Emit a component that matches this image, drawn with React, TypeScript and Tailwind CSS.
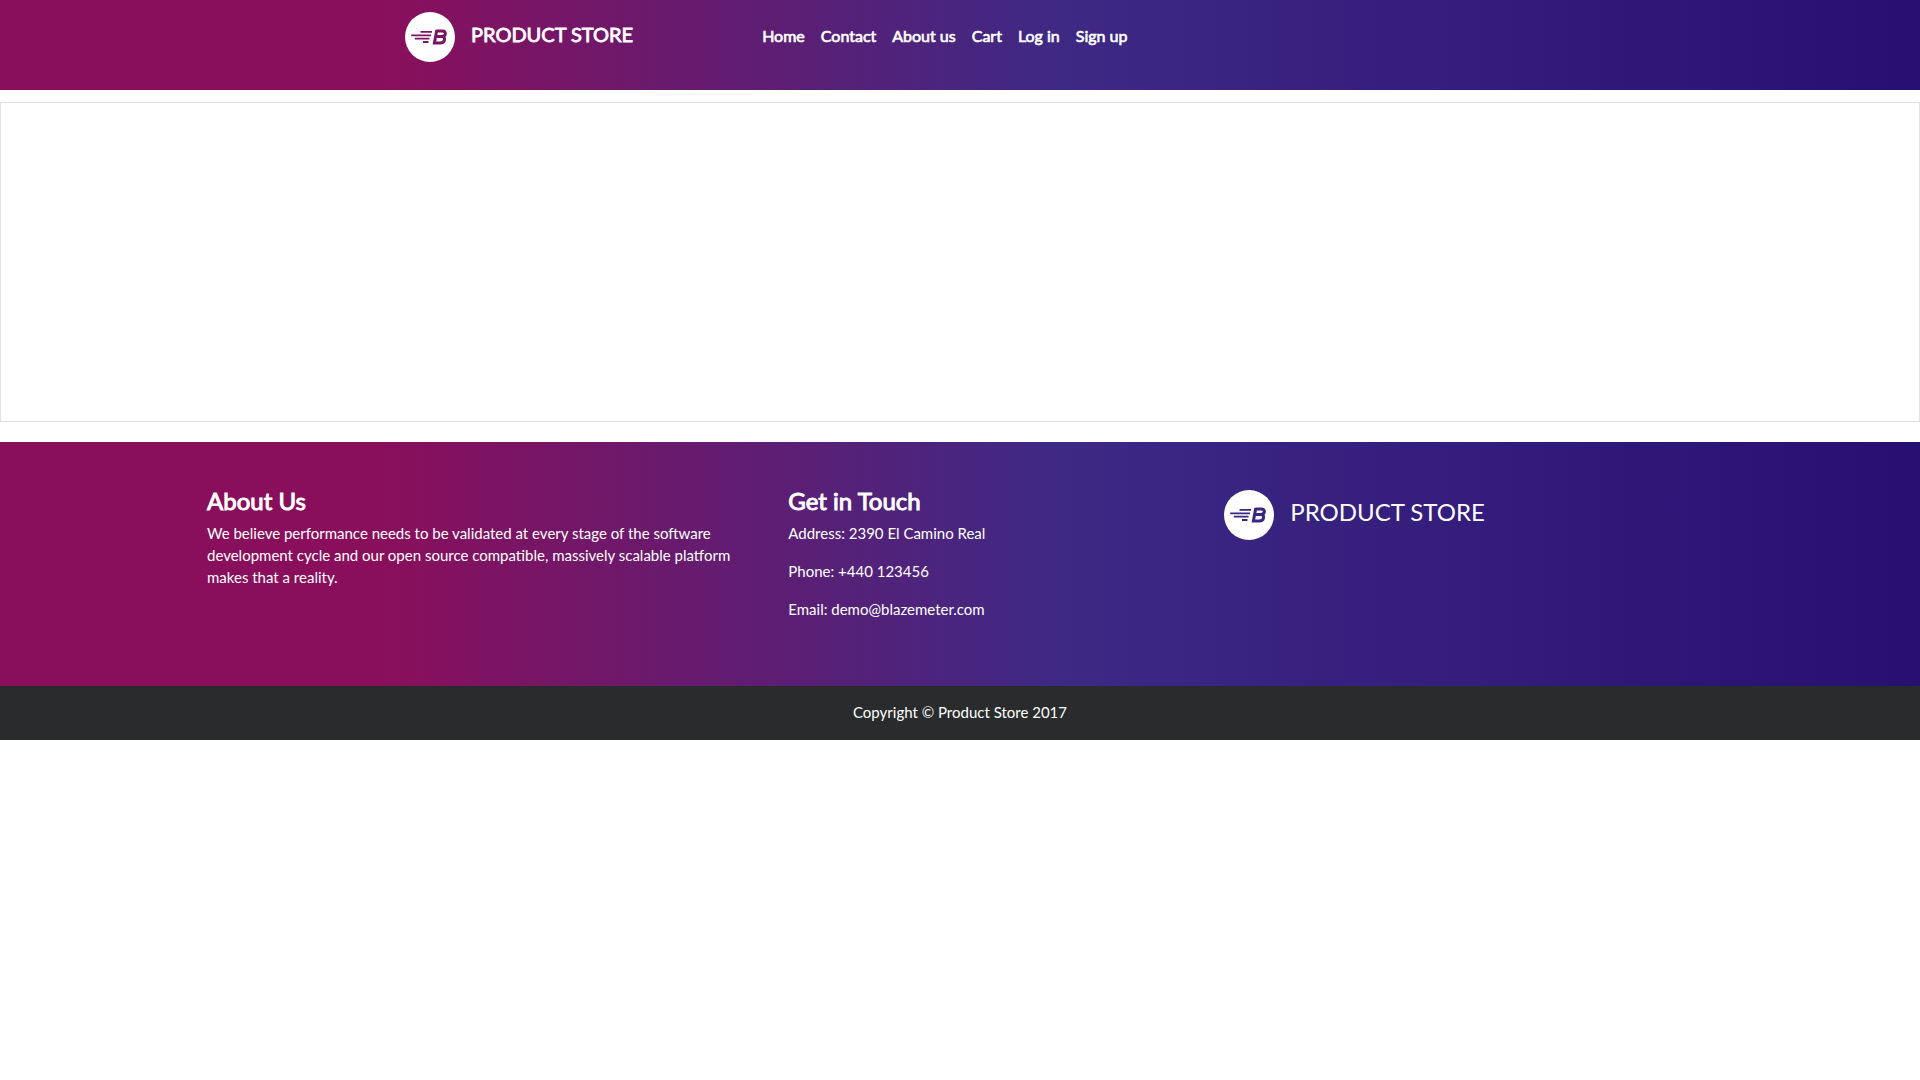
const navItems = ["Home", "Contact", "About us", "Cart", "Log in", "Sign up"];

const contactLines = [
  "Address: 2390 El Camino Real",
  "Phone: +440 123456",
  "Email: demo@blazemeter.com",
];

function Logo({ color }: { color: string }) {
  return (
    <svg viewBox="0 0 50 50" className="size-[50px] shrink-0" aria-hidden="true">
      <circle cx="25" cy="25" r="25" fill="#fff" />
      <g fill="none" stroke={color}>
        <path d="M15.5 19.9H27M6.2 23.3H26M9.8 26.7H24.5M18 30H23.5" strokeWidth="1.8" />
        <path
          d="M31.4 19H37.2C42 19 41 24.6 36.8 24.6H31.6M36.8 24.6C41.4 24.6 40 31 35.2 31H29.4L31.8 18"
          strokeWidth="3"
        />
      </g>
    </svg>
  );
}

export default function App() {
  return (
    <div className="font-['Lato',sans-serif] text-[15px] leading-[22px] text-white">
      <header className="h-[90px] bg-[linear-gradient(90deg,#890f5c_0%,#890f5c_20%,#3e2985_55%,#280f72_100%)]">
        <div className="mx-auto flex max-w-[1140px] items-start px-[15px] pt-3">
          <a href="#" className="flex items-start gap-4 text-[20px]">
            <Logo color="#7c1464" />
            <span className="pt-[11px] [-webkit-text-stroke:0.04em]">PRODUCT STORE</span>
          </a>
          <nav className="ml-[121px] flex pt-[13px] text-[16px] [-webkit-text-stroke:0.04em]">
            {navItems.map((item) => (
              <a key={item} href="#" className="px-2">
                {item}
              </a>
            ))}
          </nav>
        </div>
      </header>

      <main className="mt-3 h-80 border border-[#dee2e6] bg-white" />

      <footer className="mt-5">
        <div className="overflow-hidden bg-[linear-gradient(90deg,#890f5c_0%,#890f5c_20%,#3e2985_55%,#280f72_100%)] pt-12 pb-[66px]">
          <div className="-mr-4 ml-[10%] flex">
            <section className="w-1/3 px-[15px]">
              <h4 className="mb-[10px] text-[24px] leading-[22px] [-webkit-text-stroke:0.04em]">About Us</h4>
              <p>
                We believe performance needs to be validated at every stage of the software development
                cycle and our open source compatible, massively scalable platform makes that a reality.
              </p>
            </section>
            <section className="w-1/4 px-[15px]">
              <h4 className="mb-[10px] text-[24px] leading-[22px] [-webkit-text-stroke:0.04em]">Get in Touch</h4>
              <div className="flex flex-col gap-4">
                {contactLines.map((line) => (
                  <p key={line}>{line}</p>
                ))}
              </div>
            </section>
            <section className="flex w-1/4 items-start gap-4 px-[15px] text-[24px]">
              <Logo color="#3a2680" />
              <h4 className="pt-[11px]">PRODUCT STORE</h4>
            </section>
          </div>
        </div>
        <p className="bg-[#292b2c] pt-[15px] pb-[17px] text-center">Copyright © Product Store 2017</p>
      </footer>
    </div>
  );
}
